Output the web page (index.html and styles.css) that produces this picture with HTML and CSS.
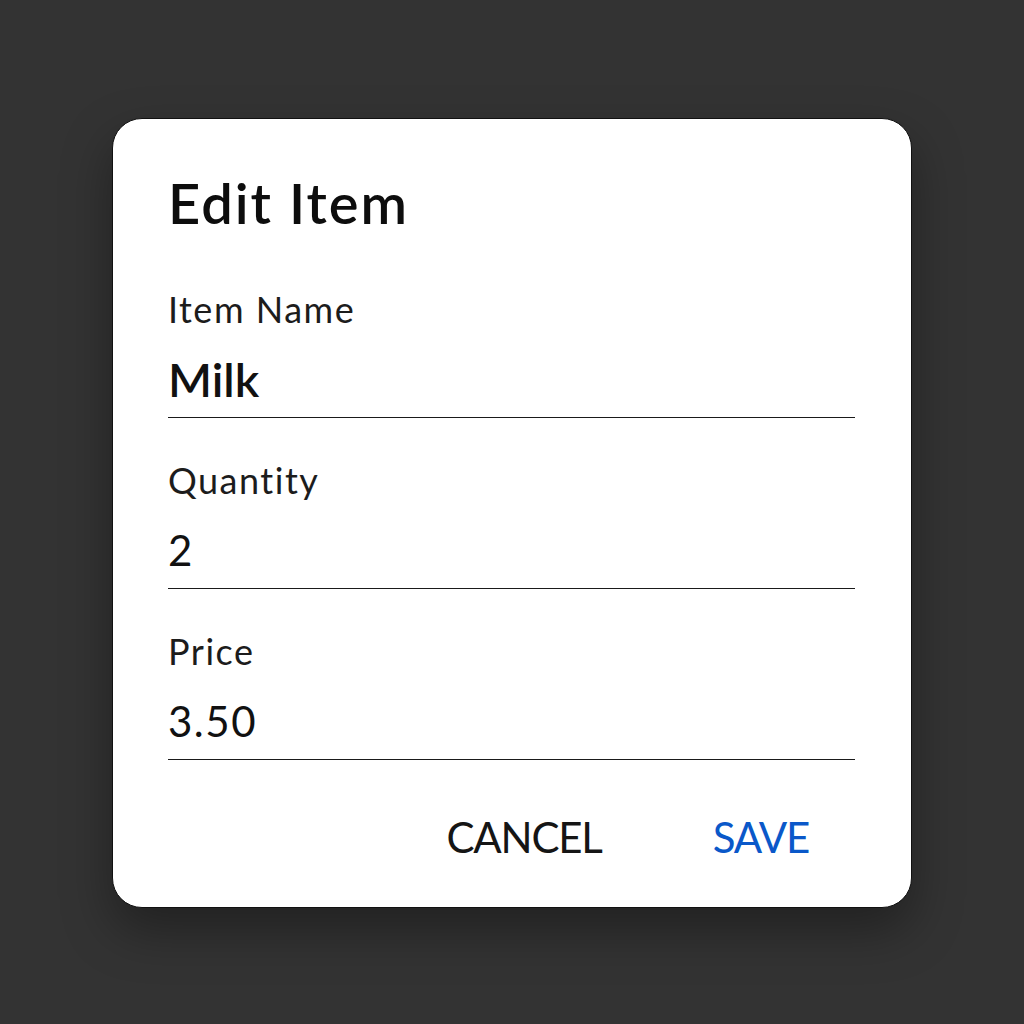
FILE: index.html
```html
<!DOCTYPE html>
<html lang="en">
<head>
<meta charset="utf-8">
<title>Edit Item</title>
<link rel="stylesheet" href="styles.css">
</head>
<body>
<div class="dialog">
  <h1 class="title">Edit Item</h1>
  <div class="fields">
    <div class="field">
      <div class="label">Item Name</div>
      <div class="value value-strong">Milk</div>
    </div>
    <div class="field">
      <div class="label">Quantity</div>
      <div class="value">2</div>
    </div>
    <div class="field">
      <div class="label">Price</div>
      <div class="value">3.50</div>
    </div>
  </div>
  <div class="actions">
    <span class="btn btn-cancel">CANCEL</span>
    <span class="btn btn-save">SAVE</span>
  </div>
</div>
</body>
</html>
```
FILE: styles.css
```css
html, body {
  margin: 0;
  padding: 0;
  background: #333333;
  width: 1024px;
  height: 1024px;
  overflow: hidden;
}
body {
  font-family: "Lato", "Noto Sans", sans-serif;
  color: #111;
  padding-top: 118px;
  box-sizing: border-box;
}
.dialog {
  margin-left: 112px;
  width: 800px;
  height: 790px;
  box-sizing: border-box;
  background: #fff;
  border: 1px solid #111;
  border-radius: 30px;
  box-shadow: 0 22px 50px rgba(0, 0, 0, 0.35);
  padding: 56px 56px 0 55px;
  display: flex;
  flex-direction: column;
}
.title {
  margin: 0;
  font-size: 56px;
  line-height: 56px;
  font-weight: 600;
  letter-spacing: 2px;
  color: #0d0d0d;
}
.fields {
  margin-top: 60px;
  display: flex;
  flex-direction: column;
  gap: 44px;
}
.field {
  display: flex;
  flex-direction: column;
  gap: 28px;
  padding-bottom: 14px;
  border-bottom: 1px solid #1a1a1a;
}
.label {
  font-size: 36px;
  line-height: 36px;
  letter-spacing: 1.5px;
  color: #1c1c1c;
}
.value {
  font-size: 42px;
  line-height: 48px;
  letter-spacing: 1.5px;
  color: #111;
}
.value-strong {
  font-size: 47px;
  font-weight: 600;
  letter-spacing: 0;
}
.actions {
  margin-top: 56px;
  display: flex;
  justify-content: flex-end;
  gap: 111px;
  padding-right: 46px;
}
.btn {
  font-size: 42px;
  line-height: 42px;
}
.btn-cancel {
  color: #151515;
  letter-spacing: -1.2px;
}
.btn-save {
  color: #0a58c9;
  letter-spacing: -1.2px;
}
```
